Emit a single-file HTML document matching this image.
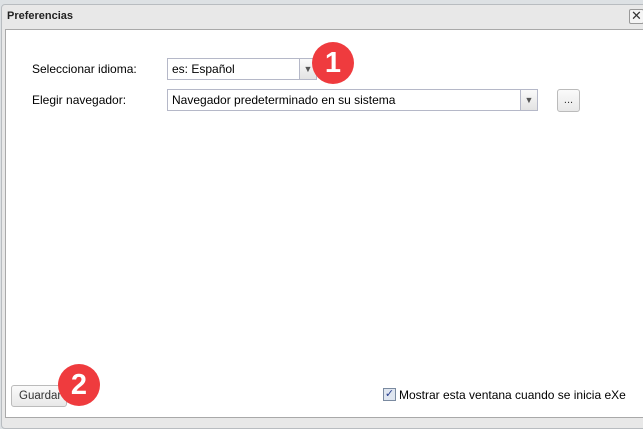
<!DOCTYPE html>
<html><head><meta charset="utf-8"><style>
*{box-sizing:border-box}
body{margin:0;width:643px;height:423px;background:#dde1e4;font-family:"Liberation Sans",Arial,sans-serif;font-size:12px;color:#000;position:relative;overflow:hidden}
.win{position:absolute;left:1px;top:4px;width:650px;height:425px;background:#e8e8e8;border:1px solid #b8bcc0;border-radius:4px}
.title{position:absolute;left:7px;top:10px;font-weight:bold;font-size:11px;color:#222}
.close{position:absolute;left:629px;top:9px;width:15px;height:15px;border:1px solid #999;background:#f4f4f4;border-radius:2px;font-size:13px;line-height:12px;text-align:center;color:#333}
.panel{position:absolute;left:5px;top:29px;width:650px;height:389px;background:#fff;border:1px solid #a9a9a9}
.a{position:absolute}
.sel{position:absolute;border:1px solid #b5b8c8;background:#fff;height:22px;line-height:20px;padding-left:4px;font-size:12px}
.arr{position:absolute;right:0;top:0;width:17px;height:20px;background:linear-gradient(#fafafa,#e3e3e3);border-left:1px solid #b5b8c8;font-size:9px;text-align:center;color:#555}
.btn{position:absolute;border:1px solid #bbb;border-radius:3px;background:linear-gradient(#fafafa,#e8e8e8);text-align:center;font-size:11px;color:#333}
.badge{position:absolute;width:42px;height:42px;border-radius:50%;background:#ef3b3e;color:#fff;font-size:29px;line-height:42px;text-align:center;font-weight:bold}
</style></head><body>
<div class="win"></div>
<div class="title">Preferencias</div>
<div class="close">✕</div>
<div class="panel"></div>
<div class="a" style="left:32px;top:62px;font-size:12px">Seleccionar idioma:</div>
<div class="sel" style="left:167px;top:58px;width:150px">es: Español<div class="arr">&#9660;</div></div>
<div class="a" style="left:32px;top:93px;font-size:12px">Elegir navegador:</div>
<div class="sel" style="left:167px;top:89px;width:371px">Navegador predeterminado en su sistema<div class="arr">&#9660;</div></div>
<div class="btn" style="left:557px;top:89px;width:23px;height:23px;line-height:20px">...</div>
<div class="badge" style="left:312px;top:42px">1</div>
<div class="btn" style="left:11px;top:385px;width:56px;height:22px;line-height:20px;text-align:left;padding-left:7px;font-size:11.5px">Guardar</div>
<div class="badge" style="left:58px;top:364px">2</div>
<div class="a" style="left:383px;top:388px;width:13px;height:13px;border:1px solid #7a8aa0;background:#dfe6f0;font-size:11px;line-height:11px;text-align:center;color:#2a3f8f">✓</div>
<div class="a" style="left:399px;top:388px;font-size:12px">Mostrar esta ventana cuando se inicia eXe</div>
</body></html>
